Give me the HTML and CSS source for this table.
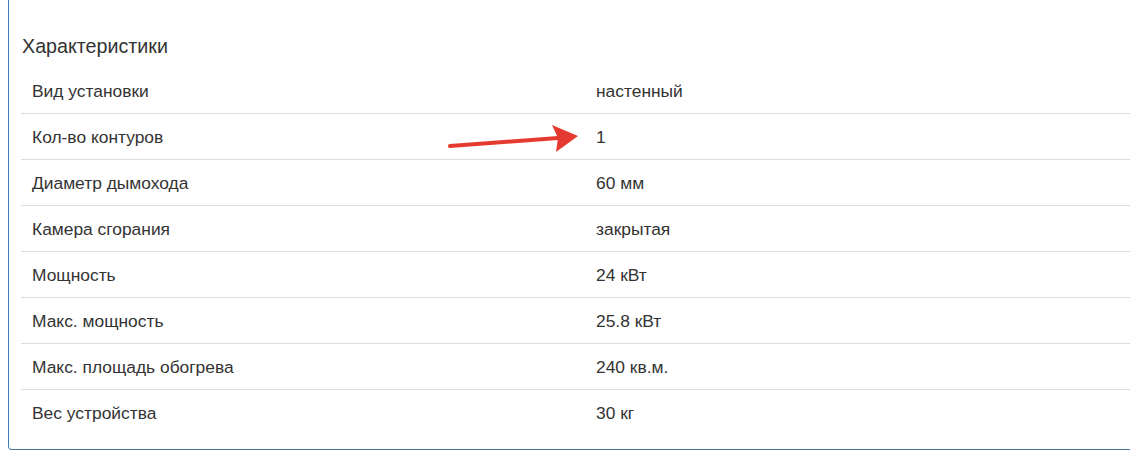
FILE: index.html
```html
<!DOCTYPE html>
<html lang="ru">
<head>
<meta charset="utf-8">
<title>Характеристики</title>
<link rel="stylesheet" href="styles.css">
</head>
<body>
<div class="panel">
  <h3 class="panel-title">Характеристики</h3>
  <table class="specs">
    <tbody>
      <tr><td>Вид установки</td><td>настенный</td></tr>
      <tr><td>Кол-во контуров</td><td>1</td></tr>
      <tr><td>Диаметр дымохода</td><td>60 мм</td></tr>
      <tr><td>Камера сгорания</td><td>закрытая</td></tr>
      <tr><td>Мощность</td><td>24 кВт</td></tr>
      <tr><td>Макс. мощность</td><td>25.8 кВт</td></tr>
      <tr><td>Макс. площадь обогрева</td><td>240 кв.м.</td></tr>
      <tr><td>Вес устройства</td><td>30 кг</td></tr>
    </tbody>
  </table>
  <svg class="arrow" width="140" height="40" viewBox="0 0 140 40" aria-hidden="true">
    <line x1="10" y1="26" x2="118" y2="18" stroke="#e53a30" stroke-width="4" stroke-linecap="round"/>
    <polygon points="112,5 138,16 116,32 118,18" fill="#e53a30"/>
  </svg>
</div>
</body>
</html>
```
FILE: styles.css
```css
html, body {
  margin: 0;
  padding: 0;
  overflow: hidden;
  background: #fff;
}
body {
  width: 1130px;
  height: 452px;
  font-family: "Liberation Sans", Arial, sans-serif;
  color: #333;
}
.panel {
  position: relative;
  margin-left: 8px;
  width: 1160px;
  border: 1px solid #3b7cc0;
  border-top: none;
  border-bottom-color: #4a72a0;
  border-radius: 0 0 4px 4px;
  padding: 34px 0 0 12px;
  box-sizing: border-box;
  height: 450px;
}
.panel-title {
  margin: 0 0 0 1px;
  font-size: 19.7px;
  font-weight: normal;
  line-height: 24px;
  color: #333;
}
.specs {
  margin-top: 10px;
  width: 1128px;
  border-collapse: collapse;
  font-size: 17.4px;
}
.specs td {
  padding: 12px 11px 11px 11px;
  line-height: 22px;
  height: 22px;
  width: 50%;
  vertical-align: top;
}
.specs tr + tr td {
  border-top: 1px solid #ddd;
}
.arrow {
  position: absolute;
  left: 431px;
  top: 120px;
}
```
